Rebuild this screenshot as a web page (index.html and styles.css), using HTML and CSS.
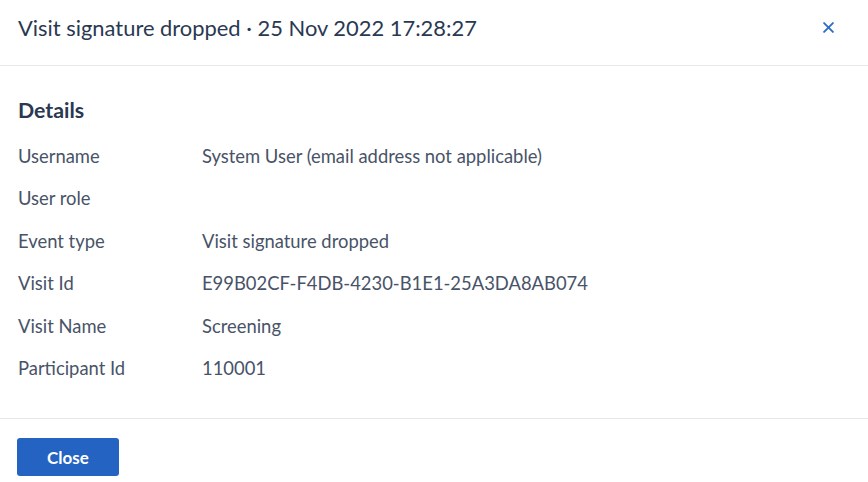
FILE: index.html
```html
<!DOCTYPE html>
<html>
<head>
<meta charset="utf-8">
<link rel="stylesheet" href="styles.css">
</head>
<body>
<div class="modal">
  <div class="header">
    <div class="title">Visit signature dropped · 25 Nov 2022 17:28:27</div>
    <div class="close-x">
      <svg width="11" height="11" viewBox="0 0 10 10"><path d="M1 1L9 9M9 1L1 9" stroke="#2d6cc7" stroke-width="1.7" stroke-linecap="round"/></svg>
    </div>
  </div>
  <div class="body">
    <div class="section-title">Details</div>
    <div class="rows">
      <div class="row"><div class="label">Username</div><div class="value">System User (email address not applicable)</div></div>
      <div class="row"><div class="label">User role</div><div class="value"></div></div>
      <div class="row"><div class="label">Event type</div><div class="value">Visit signature dropped</div></div>
      <div class="row"><div class="label">Visit Id</div><div class="value">E99B02CF-F4DB-4230-B1E1-25A3DA8AB074</div></div>
      <div class="row"><div class="label">Visit Name</div><div class="value">Screening</div></div>
      <div class="row"><div class="label">Participant Id</div><div class="value">110001</div></div>
    </div>
  </div>
  <div class="footer">
    <button class="btn">Close</button>
  </div>
</div>
</body>
</html>
```

FILE: styles.css
```css
* { box-sizing: border-box; }
html, body { margin: 0; padding: 0; background: #fff; }
body { font-family: Lato, "Open Sans", sans-serif; color: #2b3a55; }
.modal { width: 868px; height: 482px; display: flex; flex-direction: column; overflow: hidden; }
.header {
  flex: none;
  height: 66px;
  border-bottom: 1px solid #e6e8ec;
  display: flex;
  align-items: center;
  justify-content: space-between;
  padding: 0 34px 10px 18px;
}
.title { font-size: 21.9px; color: #2a3852; }
.close-x { display: flex; align-items: center; }
.body { flex: none; padding: 30px 18px 0 18px; height: 353px; border-bottom: 1px solid #e6e8ec; }
.section-title { font-size: 21.3px; font-weight: 700; color: #2a3852; line-height: 28px; }
.rows { margin-top: 10.5px; }
.row { display: flex; height: 42.5px; align-items: center; font-size: 18.4px; color: #485368; }
.label { width: 184px; flex: none; }
.footer { flex: none; padding: 19px 17px 6px; }
.btn {
  display: block;
  width: 102px; height: 38px;
  background: #2563c2;
  color: #fff;
  border: none;
  border-radius: 3px;
  font-family: Lato, sans-serif;
  font-weight: 700;
  font-size: 17px;
}
```
